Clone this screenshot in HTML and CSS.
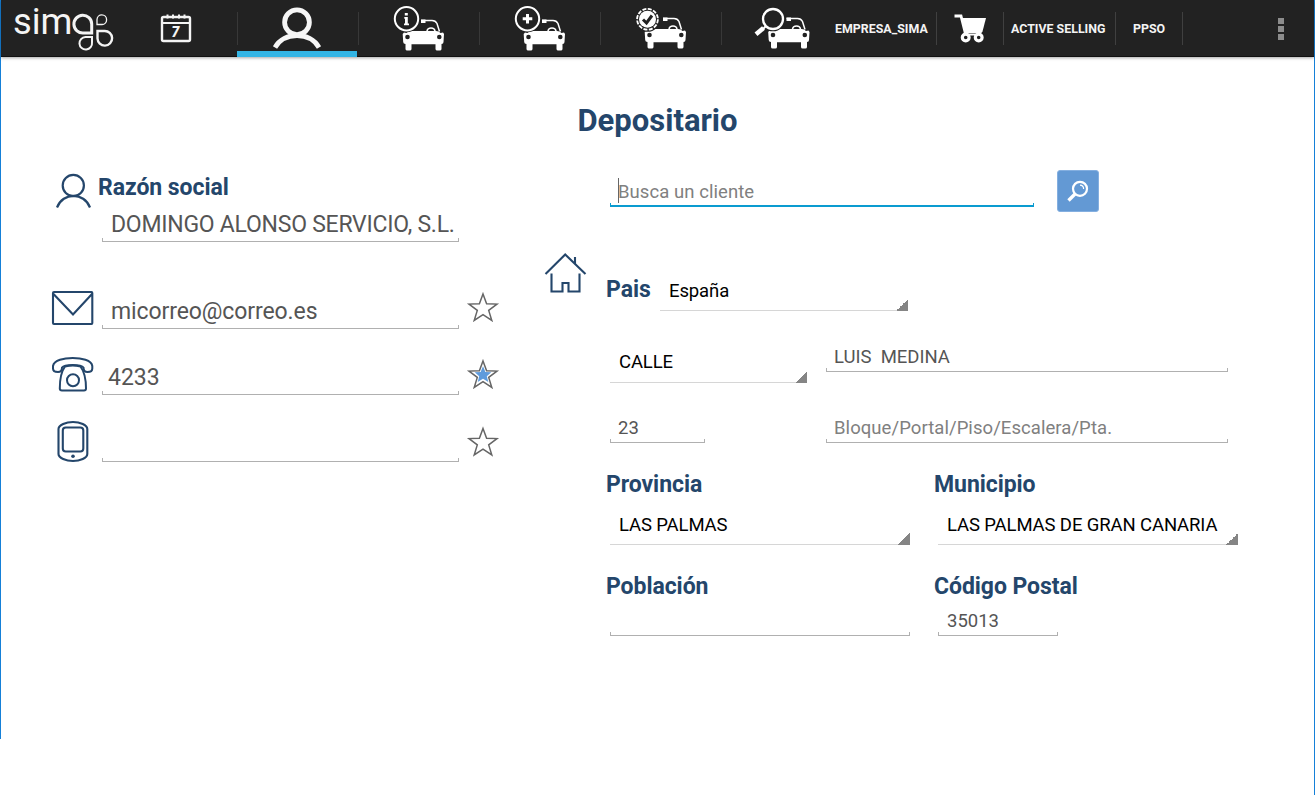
FILE: index.html
```
<!DOCTYPE html>
<html lang="es">
<head>
<meta charset="utf-8">
<title>Depositario</title>
<link rel="stylesheet" href="styles.css">
</head>
<body>
<svg class="defs" width="0" height="0">
  <defs>
    <g id="car">
      <path fill="#fff" d="M406.500 33Q408 31 411 31H436Q439 31 440.500 33L443 32.500L444 34L443.500 42Q443.500 43.800 441.500 44V49Q441.500 50.600 439.800 50.600H437.200Q435.500 50.600 435.500 49V44.300H411.500V49Q411.500 50.600 409.800 50.600H407.200Q405.500 50.600 405.500 49V44Q403.300 43.800 403.200 42L402.700 34L404 32.500Z"/>
      <circle cx="407.500" cy="37" r="2.300" fill="#222"/><circle cx="439.300" cy="37" r="2.300" fill="#222"/>
      <path fill="none" stroke="#fff" stroke-width="1.500" d="M421 20.500H432Q435.500 20.500 437 23.500L439.500 31.500M427 31Q427.500 28 431 28T435 31"/>
      <path fill="#fff" d="M421 19.500h4.500v3.500h-4.500z"/>
    </g>
    <path id="star" d="M483 294.500L486.600 304.300L497 304.600L488.700 310.900L491.800 321L483 315.200L474.200 321L477.300 310.900L469 304.600L479.400 304.300Z" fill="none" stroke="#666" stroke-width="1.500"/>
  </defs>
</svg>
<div class="screen">
  <header class="bar">
    <svg class="logo" viewBox="0 0 115 57" role="img" aria-label="sima">
      <text x="12" y="34" class="word" textLength="59.500" lengthAdjust="spacingAndGlyphs">sim</text>
      <g fill="none" stroke="#f4f4f4" stroke-width="2">
        <path stroke-width="3" d="M90.700 33H82.500A8.900 8.900 0 1 1 90.700 24Z"/>
        <path stroke-width="1.300" d="M96 24.500V19.500A4.800 4.800 0 1 1 101 24.500Z"/>
        <path stroke-width="2.400" d="M96.500 31H103.500A7.300 7.300 0 1 1 96.500 38.500Z"/>
        <path d="M91 37V42.500A6.300 6.300 0 1 1 84.500 37Z"/>
      </g>
    </svg>
    <svg class="tab" viewBox="116 0 121 57">
      <rect x="162" y="17" width="28" height="24" rx="1.500" fill="none" stroke="#f4f4f4" stroke-width="2.400"/>
      <path d="M162 23H190M167.500 14.500v4M173 14.500v4M179 14.500v4M184.500 14.500v4" stroke="#f4f4f4" stroke-width="2"/>
      <text x="171.500" y="36.800" class="day">7</text>
    </svg>
    <svg class="tab active" viewBox="237 0 121 57">
      <g fill="none" stroke="#f6f6f6" stroke-width="4.800"><circle cx="297" cy="22.300" r="12.400"/><path d="M275 47.500C284 31.500 310 31.500 319 47.500"/></g>
    </svg>
    <svg class="tab sep" viewBox="358 0 121 57">
      <use href="#car"/><circle cx="406.500" cy="18.800" r="13.500" fill="#222"/>
      <circle cx="406.500" cy="18.800" r="11.700" fill="none" stroke="#fff" stroke-width="2"/>
      <path fill="#fff" d="M404.800 13h3v2.500h-3zM404.300 17h3.500v6.500h1.200v1.800h-5v-1.800h1v-4.700h-.7z"/>
    </svg>
    <svg class="tab sep" viewBox="479 0 121 57">
      <use href="#car" x="121"/><circle cx="527.500" cy="18.800" r="13.500" fill="#222"/>
      <circle cx="527.500" cy="18.800" r="11.700" fill="none" stroke="#fff" stroke-width="2"/>
      <path stroke="#fff" stroke-width="3" d="M527.500 14v9.500M522.700 18.800h9.600"/>
    </svg>
    <svg class="tab sep" viewBox="600 0 121 57">
      <use href="#car" x="242" y="-2"/><circle cx="647.500" cy="19.300" r="12.500" fill="#222"/>
      <circle cx="647.500" cy="19.300" r="10.400" fill="none" stroke="#fff" stroke-width="1.800" stroke-dasharray="4 1.440"/>
      <circle cx="647.500" cy="19.300" r="8.500" fill="#fff"/>
      <path fill="none" stroke="#222" stroke-width="3" d="M643 19.500L646.500 23L652 15.500"/>
    </svg>
    <svg class="tab sep last" viewBox="721 0 110 57">
      <use href="#car" x="365.500" y="-2"/><circle cx="773" cy="19" r="12.300" fill="#222"/>
      <circle cx="773" cy="19" r="10" fill="none" stroke="#fff" stroke-width="2.300"/>
      <path d="M765.500 26.500L763 29" stroke="#fff" stroke-width="2"/><path d="M763.500 28L756 34.300" stroke="#fff" stroke-width="4.500"/>
    </svg>
    <div class="item company">EMPRESA_SIMA</div>
    <svg class="cart sep1" viewBox="936 0 67 57">
      <path fill="none" stroke="#fff" stroke-width="2.800" d="M954.500 16H961L965.500 34"/><path fill="#fff" d="M961 18H986L982.500 31.500Q982 33 980.500 33H965.500Z"/>
      <path stroke="#fff" stroke-width="2" d="M965 34.500H981"/>
      <g fill="#222" stroke="#fff" stroke-width="3.200"><circle cx="965.700" cy="37.500" r="3.400"/><circle cx="978.700" cy="37.500" r="3.400"/></g>
    </svg>
    <div class="item selling sep1">ACTIVE SELLING</div>
    <div class="item ppso sep1">PPSO</div>
    <div class="more sep1"><i></i><i></i><i></i></div>
  </header>

  <h1>Depositario</h1>
  <main>
    <section class="contact">
      <div class="row name">
        <svg class="ico" viewBox="52 171 42 42"><g fill="none" stroke="#24466b" stroke-width="2.200"><circle cx="73.300" cy="185.500" r="10.600"/><path d="M57 207.500C63 192 84 192 90 207.500"/></g></svg>
        <div class="stack"><div class="label">Razón social</div><div class="field big company-name">DOMINGO ALONSO SERVICIO, S.L.</div></div>
      </div>
      <div class="row mail">
        <svg class="ico" viewBox="52 289 42 42"><path fill="none" stroke="#24466b" stroke-width="2.100" d="M54 292H91.500Q92.300 292 92.300 293V323Q92.300 324 91.500 324H54Q53 324 53 323V293Q53 292 54 292M53.500 294L73 314.500L92 294"/></svg>
        <div class="field big">micorreo@correo.es</div>
        <svg class="star" viewBox="468 289 30 40"><use href="#star" y="-.5"/></svg>
      </div>
      <div class="row phone">
        <svg class="ico" viewBox="52 355 42 42"><g fill="none" stroke="#24466b" stroke-width="2"><path d="M53 366C54 360 64 358 72.700 358S91.500 360 92.300 366V368.500C92.300 371.500 90 372 87.500 372S83.500 370.500 83.500 367.500C81 364 64.500 364 62 367.500C62 370.500 60.500 372 58 372S53 371.500 53 368.500Z"/><path d="M65 366.500C60.500 372.500 59.800 380 59.800 388.500Q59.800 390.500 62 390.500H84Q86 390.500 86 388.500C86 380 85 372.500 80.500 366.500Q73 364.500 65 366.500Z"/><circle cx="73" cy="380.300" r="6"/></g></svg>
        <div class="field big tel">4233</div>
        <svg class="star" viewBox="468 356 30 40"><use href="#star" y="67.500"/><path fill="#5f9bdc" d="M483 367.300L485.400 373L491.300 373.200L486.800 377.200L488.300 383L483 379.800L477.700 383L479.200 377.200L474.700 373.200L480.600 373Z"/></svg>
      </div>
      <div class="row mobile">
        <svg class="ico" viewBox="52 421 42 42"><g fill="none" stroke="#24466b" stroke-width="2.100"><path d="M58.500 428C58.500 424 66 421 73 421S87.300 424 87.300 428V453C87.300 457 80 460 73 460S58.500 457 58.500 453Z"/><rect x="62.800" y="426.500" width="20.500" height="24" rx="3"/></g><circle cx="73" cy="455.200" r="1.800" fill="#24466b"/></svg>
        <div class="field big"></div>
        <svg class="star" viewBox="468 422 30 40"><use href="#star" y="134"/></svg>
      </div>
    </section>

    <section class="address">
      <div class="line search">
        <div class="field focus"><i class="caret"></i>Busca un cliente</div>
        <button class="find" aria-label="Buscar"><svg viewBox="1057 170 42 42"><g fill="none" stroke="#fff"><circle cx="1080" cy="188.800" r="7" stroke-width="2.200"/><path stroke-width="3.400" d="M1075 194L1068.500 200.500"/><path stroke-width="1.200" d="M1080 185.200A3.800 3.800 0 0 1 1083.600 189"/></g></svg></button>
      </div>
      <div class="line country">
        <svg class="house" viewBox="545 253 42 42"><path fill="none" stroke="#24466b" stroke-width="2.100" d="M545.500 274L565.200 254.500L585.500 274M551.500 273.500V291.500H562.500V283H568.500V291.500H579.500V273.500M575 263.500V257"/></svg>
        <div class="label">Pais</div>
        <div class="spinner">España</div>
      </div>
      <div class="line street">
        <div class="spinner">CALLE</div>
        <div class="field road">LUIS  MEDINA</div>
      </div>
      <div class="line number">
        <div class="field num">23</div>
        <div class="field road hint">Bloque/Portal/Piso/Escalera/Pta.</div>
      </div>
      <div class="pair region">
        <div><div class="label">Provincia</div><div class="spinner">LAS PALMAS</div></div>
        <div><div class="label">Municipio</div><div class="spinner">LAS PALMAS DE GRAN CANARIA</div></div>
      </div>
      <div class="pair town">
        <div><div class="label">Población</div><div class="field"></div></div>
        <div><div class="label">Código Postal</div><div class="field zip">35013</div></div>
      </div>
    </section>
  </main>
</div>
</body>
</html>
```
FILE: styles.css
```
* { box-sizing: border-box; }
body { margin: 0; background: #fff; font-family: Roboto, "Liberation Sans", sans-serif; font-size: 18.5px; color: #555; }
svg { display: block; overflow: visible; flex: none; }
.defs { position: absolute; }
.screen {
  height: 795px; overflow: hidden;
  background: linear-gradient(#1580d8, #1580d8) 0 0 / 1px 739px no-repeat, linear-gradient(#1580d8, #1580d8) 100% 0 / 1px 100% no-repeat;
}

/* top bar */
.bar { display: flex; height: 57px; margin: 0 1px; background: #222; border-bottom: 1px solid #111; box-shadow: 0 1px 3px rgba(0, 0, 0, .35); }
.logo { width: 115px; height: 57px; }
.word { font: 400 36.5px Roboto, sans-serif; fill: #f4f4f4; }
.day { font: italic 900 14px Roboto, sans-serif; fill: #f4f4f4; }
.tab { width: 121px; height: 57px; }
.last { width: 110px; }
.active { background: linear-gradient(#33b5e5, #33b5e5) 0 51px / 120px 6px no-repeat, linear-gradient(#383838, #383838) 0 12px / 1px 33px no-repeat; }
.sep { background: linear-gradient(#383838, #383838) 0 12px / 1px 33px no-repeat; }
.sep1 { background: linear-gradient(#404040, #404040) 0 12px / 1px 33px no-repeat; }
.item { height: 57px; line-height: 58px; font-size: 12.4px; font-weight: 700; color: #f4f4f4; white-space: nowrap; }
.company { width: 105px; padding-left: 4px; }
.cart { width: 67px; height: 57px; }
.selling { width: 112px; padding-left: 8px; }
.ppso { width: 67px; padding-left: 18px; }
.more { flex: 1; display: flex; flex-direction: column; gap: 2px; padding: 18px 0 0 96px; }
.more i { width: 6px; height: 6px; background: #8c8c8c; }

h1 { margin: 43px 0 28px; font-size: 31px; line-height: 42px; font-weight: 700; color: #24466b; text-align: center; }
main { display: grid; grid-template-columns: 606px 1fr; }
.label { padding-top: 1px; height: 28px; font-size: 23px; line-height: 28px; font-weight: 700; letter-spacing: -.06px; color: #24466b; white-space: nowrap; }

/* inputs with a bracket-like underline */
.field {
  --c: #b0b0b0;
  height: 36px; padding: 7px 8px 0; line-height: 28px; white-space: pre; overflow: hidden;
  background: linear-gradient(var(--c), var(--c)) 0 100% / 1px 4px no-repeat, linear-gradient(var(--c), var(--c)) 100% 100% / 1px 4px no-repeat, linear-gradient(var(--c), var(--c)) 0 100% / 100% 1px no-repeat;
}
.big { width: 357px; height: 40px; padding: 8px 0 0 9px; font-size: 23px; letter-spacing: -.1px; line-height: 30px; }
.spinner {
  height: 38px; padding: 4px 9px 0; line-height: 28px; color: #000; letter-spacing: -.12px; white-space: nowrap;
  background: linear-gradient(135deg, transparent 50%, #858585 50%) 100% 100% / 12px 12px no-repeat, linear-gradient(#d6d6d6, #d6d6d6) 0 100% / 100% 1px no-repeat;
}
.hint { color: #808080; letter-spacing: .06px; }

/* left column */
.contact { padding: 3px 0 0 52px; }
.row { display: flex; }
.ico { width: 42px; height: 42px; margin-right: 8px; }
.name .ico { margin: -2px 4px 0 0; }
.stack .field { margin: 1px 0 0 4px; }
.company-name { letter-spacing: -.25px; }
.mail { height: 40px; margin-top: 47px; }
.phone { height: 40px; margin-top: 26px; }
.mobile { height: 40px; margin-top: 27px; }
.star { width: 30px; height: 40px; margin-left: 9px; }
.tel { padding-left: 6px; letter-spacing: 0; }

/* right column */
.line { display: flex; }
.search { height: 42px; padding-left: 4px; }
.focus { --c: #0a9bd0; width: 424px; height: 37px; padding-top: 8px; color: #808080; letter-spacing: .06px; background-size: 1px 4px, 1px 4px, 100% 2px; position: relative; }
.caret { position: absolute; left: 8px; top: 8px; width: 1px; height: 25px; background: #666; }
.find { width: 42px; height: 42px; margin-left: 23px; padding: 0; border: 1px solid #84afe0; border-radius: 3px; background: #6399d4; }
.find svg { width: 42px; height: 42px; margin: -1px; }
.country { margin: 41px 0 0 -61px; height: 58px; }
.house { width: 42px; height: 42px; margin-right: 19px; }
.country .label { width: 54px; margin-top: 22px; }
.country .spinner { width: 248px; margin-top: 20px; }
.street { margin-top: 25px; height: 47px; padding-left: 4px; }
.street .spinner { width: 197px; margin: 9px 19px 0 0; padding-top: 3px; }
.road { width: 402px; }
.number { margin-top: 24px; padding-left: 4px; }
.num { width: 95px; margin-right: 121px; }
.pair { display: grid; grid-template-columns: 304px 304px; column-gap: 24px; }
.pair .field, .pair .spinner { margin-left: 4px; }
.region { margin-top: 27px; }
.region .spinner { margin-top: 9px; }
.town { margin-top: 27px; }
.pair .zip { width: 120px; padding-left: 9px; }
```
